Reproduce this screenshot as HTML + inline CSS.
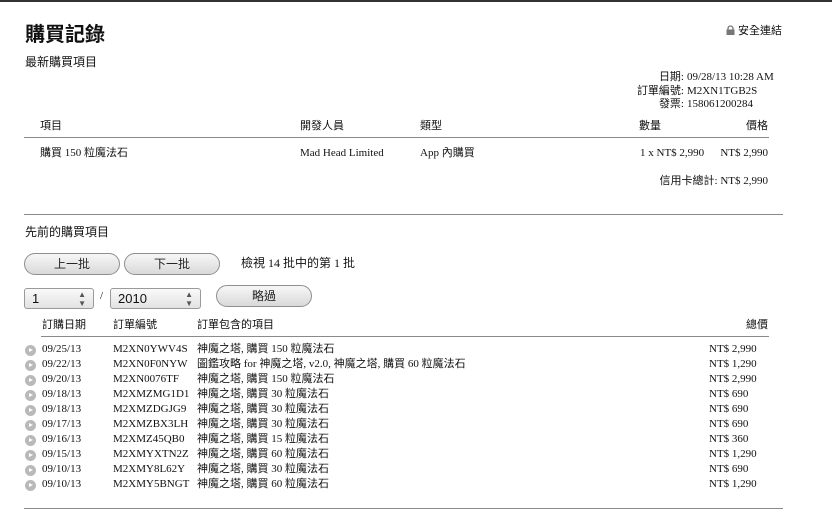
<!DOCTYPE html>
<html><head><meta charset="utf-8"><style>
*{margin:0;padding:0;box-sizing:border-box}
body{width:832px;height:518px;background:#fff;position:relative;overflow:hidden;font-family:"Liberation Serif","Noto Sans CJK TC",serif;font-size:11px;color:#111}
.a{position:absolute;white-space:nowrap;line-height:13px}
.c{font-family:"Liberation Sans","Noto Sans CJK TC",sans-serif}
.r{text-align:right}
.hr{position:absolute;height:1px;background:#8a8a8a}
.btn{position:absolute;height:22px;border:1px solid #8f8f8f;border-radius:11px;background:linear-gradient(#f7f7f7,#d9d9d9);text-align:center;font-family:"Liberation Sans","Noto Sans CJK TC",sans-serif;font-size:12px;line-height:20px;color:#222}
.sel{position:absolute;height:21px;border:1px solid #9a9a9a;border-radius:3px;background:linear-gradient(#fafafa,#e2e2e2);font-family:"Liberation Sans",sans-serif;font-size:13px;line-height:19px;padding-left:7px}
.sel span{position:absolute;right:7px;font-size:8px;color:#555;line-height:9px;top:1px}
.ic{position:absolute;left:25px;width:11px;height:11px;border-radius:50%;background:#b9b9b9}
.ic:after{content:"";position:absolute;left:4px;top:3px;border-left:4px solid #fff;border-top:2.5px solid transparent;border-bottom:2.5px solid transparent}
.row{position:relative;height:15px}
</style></head><body>
<div style="position:absolute;left:0;top:0;width:832px;height:2px;background:#333"></div>
<div class="a c" style="left:25px;top:23px;font-size:20px;line-height:24px;font-weight:bold">購買記錄</div>
<div class="a c" style="left:25px;top:56px;font-size:12px">最新購買項目</div>
<div class="a c" style="left:726px;top:25px">
<svg width="9" height="10" style="vertical-align:-1px"><path d="M2 5V3.5a2.5 2.5 0 0 1 5 0V5" fill="none" stroke="#777" stroke-width="1.3"/><rect x="0.5" y="4.5" width="8" height="5.5" fill="#777"/></svg> 安全連結</div>
<div class="a r" style="right:148px;top:71px">日期:</div><div class="a" style="left:687px;top:71px">09/28/13 10:28 AM</div>
<div class="a r" style="right:148px;top:85px">訂單編號:</div><div class="a" style="left:687px;top:85px">M2XN1TGB2S</div>
<div class="a r" style="right:148px;top:98px">發票:</div><div class="a" style="left:687px;top:98px">158061200284</div>
<div class="a c" style="left:40px;top:120px">項目</div>
<div class="a c" style="left:300px;top:120px">開發人員</div>
<div class="a c" style="left:420px;top:120px">類型</div>
<div class="a c" style="left:639px;top:120px">數量</div>
<div class="a c r" style="right:64px;top:120px">價格</div>
<div class="hr" style="left:24px;top:137px;width:745px"></div>
<div class="a" style="left:40px;top:147px">購買 150 粒魔法石</div>
<div class="a" style="left:300px;top:147px">Mad Head Limited</div>
<div class="a" style="left:420px;top:147px">App 內購買</div>
<div class="a" style="left:640px;top:147px">1 x NT$ 2,990</div>
<div class="a r" style="right:64px;top:147px">NT$ 2,990</div>
<div class="a r" style="right:64px;top:175px">信用卡總計: NT$ 2,990</div>
<div class="hr" style="left:24px;top:214px;width:759px"></div>
<div class="a c" style="left:25px;top:226px;font-size:12px">先前的購買項目</div>
<div class="btn" style="left:24px;top:253px;width:96px">上一批</div>
<div class="btn" style="left:124px;top:253px;width:96px">下一批</div>
<div class="a" style="left:241px;top:257px;font-size:12px">檢視 14 批中的第 1 批</div>
<div class="sel" style="left:24px;top:288px;width:70px">1<span>▲<br>▼</span></div>
<div class="a" style="left:100px;top:290px">/</div>
<div class="sel" style="left:110px;top:288px;width:91px">2010<span>▲<br>▼</span></div>
<div class="btn" style="left:216px;top:285px;width:96px;height:22px">略過</div>
<div class="a c" style="left:42px;top:319px">訂購日期</div>
<div class="a c" style="left:113px;top:319px">訂單編號</div>
<div class="a c" style="left:197px;top:319px">訂單包含的項目</div>
<div class="a c r" style="right:64px;top:319px">總價</div>
<div class="hr" style="left:41px;top:336px;width:728px"></div>
<div style="position:absolute;left:0;top:343px;width:832px">
<div class="row"><div class="ic" style="top:2px"></div><div class="a" style="left:42px">09/25/13</div><div class="a" style="left:113px">M2XN0YWV4S</div><div class="a" style="left:197px">神魔之塔, 購買 150 粒魔法石</div><div class="a" style="left:709px">NT$ 2,990</div></div>
<div class="row"><div class="ic" style="top:2px"></div><div class="a" style="left:42px">09/22/13</div><div class="a" style="left:113px">M2XN0F0NYW</div><div class="a" style="left:197px">圖鑑攻略 for 神魔之塔, v2.0, 神魔之塔, 購買 60 粒魔法石</div><div class="a" style="left:709px">NT$ 1,290</div></div>
<div class="row"><div class="ic" style="top:2px"></div><div class="a" style="left:42px">09/20/13</div><div class="a" style="left:113px">M2XN0076TF</div><div class="a" style="left:197px">神魔之塔, 購買 150 粒魔法石</div><div class="a" style="left:709px">NT$ 2,990</div></div>
<div class="row"><div class="ic" style="top:2px"></div><div class="a" style="left:42px">09/18/13</div><div class="a" style="left:113px">M2XMZMG1D1</div><div class="a" style="left:197px">神魔之塔, 購買 30 粒魔法石</div><div class="a" style="left:709px">NT$ 690</div></div>
<div class="row"><div class="ic" style="top:2px"></div><div class="a" style="left:42px">09/18/13</div><div class="a" style="left:113px">M2XMZDGJG9</div><div class="a" style="left:197px">神魔之塔, 購買 30 粒魔法石</div><div class="a" style="left:709px">NT$ 690</div></div>
<div class="row"><div class="ic" style="top:2px"></div><div class="a" style="left:42px">09/17/13</div><div class="a" style="left:113px">M2XMZBX3LH</div><div class="a" style="left:197px">神魔之塔, 購買 30 粒魔法石</div><div class="a" style="left:709px">NT$ 690</div></div>
<div class="row"><div class="ic" style="top:2px"></div><div class="a" style="left:42px">09/16/13</div><div class="a" style="left:113px">M2XMZ45QB0</div><div class="a" style="left:197px">神魔之塔, 購買 15 粒魔法石</div><div class="a" style="left:709px">NT$ 360</div></div>
<div class="row"><div class="ic" style="top:2px"></div><div class="a" style="left:42px">09/15/13</div><div class="a" style="left:113px">M2XMYXTN2Z</div><div class="a" style="left:197px">神魔之塔, 購買 60 粒魔法石</div><div class="a" style="left:709px">NT$ 1,290</div></div>
<div class="row"><div class="ic" style="top:2px"></div><div class="a" style="left:42px">09/10/13</div><div class="a" style="left:113px">M2XMY8L62Y</div><div class="a" style="left:197px">神魔之塔, 購買 30 粒魔法石</div><div class="a" style="left:709px">NT$ 690</div></div>
<div class="row"><div class="ic" style="top:2px"></div><div class="a" style="left:42px">09/10/13</div><div class="a" style="left:113px">M2XMY5BNGT</div><div class="a" style="left:197px">神魔之塔, 購買 60 粒魔法石</div><div class="a" style="left:709px">NT$ 1,290</div></div>
</div>
<div class="hr" style="left:24px;top:508px;width:759px"></div>
</body></html>
